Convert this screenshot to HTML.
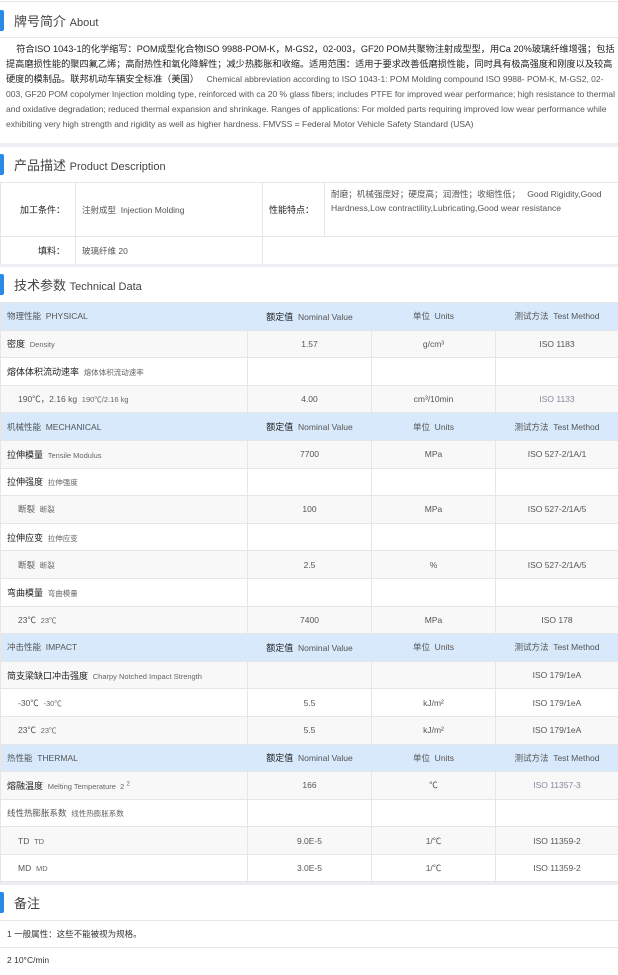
<!DOCTYPE html>
<html><head><meta charset="utf-8"><style>
*{margin:0;padding:0;box-sizing:border-box}
body{width:618px;height:975px;background:#fff;font-family:"Liberation Sans","Noto Sans CJK SC",sans-serif;color:#333;position:relative;overflow:hidden}
.sec{position:absolute;left:0;width:618px;height:36px}
.sec .bar{position:absolute;left:0;top:8px;width:4px;height:21px;background:#2b8ae6;border-radius:0 2px 2px 0}
.sec .t{position:absolute;left:14px;top:9px;font-size:13px;color:#444;white-space:nowrap}
.sec .t small{font-size:11px}
.gap{position:absolute;left:0;width:618px;background:#eceef1}
.hl{position:absolute;left:0;width:618px;height:1px;background:#e6e6e6}
.about{position:absolute;left:6px;top:42px;width:610px;font-size:9.2px;line-height:15px;color:#222}
.about .en{color:#555;font-size:8.5px}
table{border-collapse:collapse;position:absolute;left:0;width:618px;table-layout:fixed}
td{border:1px solid #e6e6e6;font-size:8.5px;color:#555;height:27.6px;padding:0 0 0 6px;white-space:nowrap}
td.c{text-align:center;padding:0}
tr.h td{background:#d7e9fb;color:#555}
tr.g td{background:#f8f8f8}
b{font-weight:normal;color:#222;font-size:9px}
.s{font-size:7.5px;color:#666}
.pd td{font-size:8.5px}
</style></head><body>
<div class="hl" style="top:1px;background:#e4e6ea;height:1px"></div>
<div class="sec" style="top:2px"><div class="bar"></div><div class="t">牌号简介 <small>About</small></div></div>
<div class="hl" style="top:37px"></div>
<div class="about">&nbsp;&nbsp;&nbsp;&nbsp;符合ISO 1043-1的化学缩写：POM成型化合物ISO 9988-POM-K，M-GS2，02-003，GF20 POM共聚物注射成型型，用Ca 20%玻璃纤维增强；包括提高磨损性能的聚四氟乙烯；高耐热性和氧化降解性；减少热膨胀和收缩。适用范围：适用于要求改善低磨损性能，同时具有极高强度和刚度以及较高硬度的模制品。联邦机动车辆安全标准（美国）&nbsp;&nbsp;&nbsp;<span class="en">Chemical abbreviation according to ISO 1043-1: POM Molding compound ISO 9988- POM-K, M-GS2, 02-003, GF20 POM copolymer Injection molding type, reinforced with ca 20 % glass fibers; includes PTFE for improved wear performance; high resistance to thermal and oxidative degradation; reduced thermal expansion and shrinkage. Ranges of applications: For molded parts requiring improved low wear performance while exhibiting very high strength and rigidity as well as higher hardness. FMVSS = Federal Motor Vehicle Safety Standard (USA)</span></div>
<div class="gap" style="top:143px;height:4px"></div>
<div class="sec" style="top:146px"><div class="bar"></div><div class="t">产品描述 <small>Product Description</small></div></div>
<table class="pd" style="top:182px">
<colgroup><col style="width:75px"><col style="width:187px"><col style="width:62px"><col style="width:294px"></colgroup>
<tr><td style="height:54px;text-align:right;padding-right:10px"><b>加工条件：</b></td><td>注射成型&nbsp; Injection Molding</td><td style="text-align:right;padding-right:10px"><b>性能特点：</b></td><td style="white-space:normal;line-height:14px;font-size:8.6px;vertical-align:top;padding-top:4px">耐磨；机械强度好；硬度高；润滑性；收缩性低；&nbsp;&nbsp; Good Rigidity,Good Hardness,Low contractility,Lubricating,Good wear resistance</td></tr>
<tr><td style="height:28px;text-align:right;padding-right:10px"><b>填料：</b></td><td>玻璃纤维 20</td><td colspan="2"></td></tr>
</table>
<div class="gap" style="top:264px;height:3px"></div>
<div class="sec" style="top:266px"><div class="bar"></div><div class="t">技术参数 <small>Technical Data</small></div></div>
<table style="top:302px">
<colgroup><col style="width:247px"><col style="width:124px"><col style="width:124px"><col style="width:123px"></colgroup>
<tr class="h"><td>物理性能&nbsp; PHYSICAL</td><td class="c"><b>额定值</b>&nbsp; Nominal Value</td><td class="c">单位&nbsp; Units</td><td class="c">测试方法&nbsp; Test Method</td></tr>
<tr class="g"><td><b>密度</b>&nbsp; <span class="s">Density</span></td><td class="c">1.57</td><td class="c">g/cm³</td><td class="c">ISO 1183</td></tr>
<tr><td><b>熔体体积流动速率</b>&nbsp; <span class="s">熔体体积流动速率</span></td><td></td><td></td><td></td></tr>
<tr class="g"><td style="padding-left:17px">190℃，2.16 kg&nbsp; <span class="s">190℃/2.16 kg</span></td><td class="c">4.00</td><td class="c">cm³/10min</td><td class="c" style="color:#889">ISO 1133</td></tr>
<tr class="h"><td>机械性能&nbsp; MECHANICAL</td><td class="c"><b>额定值</b>&nbsp; Nominal Value</td><td class="c">单位&nbsp; Units</td><td class="c">测试方法&nbsp; Test Method</td></tr>
<tr class="g"><td><b>拉伸模量</b>&nbsp; <span class="s">Tensile Modulus</span></td><td class="c">7700</td><td class="c">MPa</td><td class="c">ISO 527-2/1A/1</td></tr>
<tr><td><b>拉伸强度</b>&nbsp; <span class="s">拉伸强度</span></td><td></td><td></td><td></td></tr>
<tr class="g"><td style="padding-left:17px">断裂&nbsp; <span class="s">断裂</span></td><td class="c">100</td><td class="c">MPa</td><td class="c">ISO 527-2/1A/5</td></tr>
<tr><td><b>拉伸应变</b>&nbsp; <span class="s">拉伸应变</span></td><td></td><td></td><td></td></tr>
<tr class="g"><td style="padding-left:17px">断裂&nbsp; <span class="s">断裂</span></td><td class="c">2.5</td><td class="c">%</td><td class="c">ISO 527-2/1A/5</td></tr>
<tr><td><b>弯曲模量</b>&nbsp; <span class="s">弯曲模量</span></td><td></td><td></td><td></td></tr>
<tr class="g"><td style="padding-left:17px">23℃&nbsp; <span class="s">23℃</span></td><td class="c">7400</td><td class="c">MPa</td><td class="c">ISO 178</td></tr>
<tr class="h"><td>冲击性能&nbsp; IMPACT</td><td class="c"><b>额定值</b>&nbsp; Nominal Value</td><td class="c">单位&nbsp; Units</td><td class="c">测试方法&nbsp; Test Method</td></tr>
<tr class="g"><td><b>简支梁缺口冲击强度</b>&nbsp; <span class="s">Charpy Notched Impact Strength</span></td><td></td><td></td><td class="c">ISO 179/1eA</td></tr>
<tr><td style="padding-left:17px">-30℃&nbsp; <span class="s">-30℃</span></td><td class="c">5.5</td><td class="c">kJ/m²</td><td class="c">ISO 179/1eA</td></tr>
<tr class="g"><td style="padding-left:17px">23℃&nbsp; <span class="s">23℃</span></td><td class="c">5.5</td><td class="c">kJ/m²</td><td class="c">ISO 179/1eA</td></tr>
<tr class="h"><td>热性能&nbsp; THERMAL</td><td class="c"><b>额定值</b>&nbsp; Nominal Value</td><td class="c">单位&nbsp; Units</td><td class="c">测试方法&nbsp; Test Method</td></tr>
<tr class="g"><td><b>熔融温度</b>&nbsp; <span class="s">Melting Temperature&nbsp; 2 <sup>2</sup></span></td><td class="c">166</td><td class="c">℃</td><td class="c" style="color:#889">ISO 11357-3</td></tr>
<tr><td>线性热膨胀系数&nbsp; <span class="s">线性热膨胀系数</span></td><td></td><td></td><td></td></tr>
<tr class="g"><td style="padding-left:17px">TD&nbsp; <span class="s">TD</span></td><td class="c">9.0E-5</td><td class="c">1/℃</td><td class="c">ISO 11359-2</td></tr>
<tr><td style="padding-left:17px">MD&nbsp; <span class="s">MD</span></td><td class="c">3.0E-5</td><td class="c">1/℃</td><td class="c">ISO 11359-2</td></tr>
</table>
<div class="gap" style="top:882px;height:3px"></div>
<div class="sec" style="top:884px"><div class="bar"></div><div class="t">备注</div></div>
<div class="hl" style="top:920px"></div>
<div style="position:absolute;left:7px;top:928px;font-size:8.5px;color:#333">1 一般属性：这些不能被视为规格。</div>
<div class="hl" style="top:947px"></div>
<div style="position:absolute;left:7px;top:955px;font-size:8.5px;color:#333">2 10°C/min</div>
</body></html>
